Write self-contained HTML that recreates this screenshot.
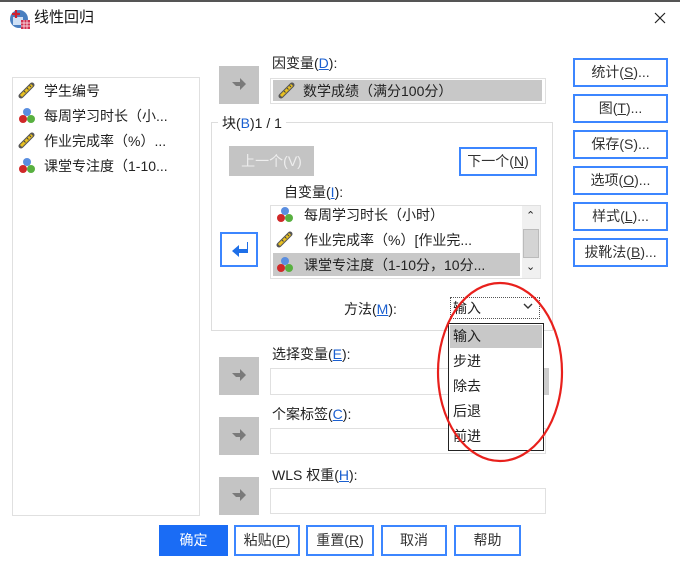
<!DOCTYPE html>
<html><head><meta charset="utf-8"><style>
*{box-sizing:border-box;margin:0;padding:0}
body{width:680px;height:569px;background:#fff;position:relative;overflow:hidden;font-family:"Liberation Sans","Noto Sans CJK SC",sans-serif;font-size:14px;color:#222}
.a{position:absolute}
.t{position:absolute;white-space:nowrap;line-height:18px}
.box{position:absolute;border:1px solid #e0e0e0;background:#fff}
.garr{position:absolute;width:40px;height:38px;background:#c4c4c4}
.rb{position:absolute;left:573px;width:95px;height:29px;border:2px solid #3c86ff;background:#fff;text-align:center;line-height:25px;color:#333}
.bb{position:absolute;top:525px;height:31px;border:2px solid #3c86ff;background:#fff;text-align:center;line-height:27px;color:#333}
u{text-decoration:underline}
.k{color:#1a5fd0}
</style></head><body>
<div class="a" style="left:0;top:0;width:680px;height:2px;background:#555"></div>
<svg class="a" style="left:9px;top:8px" width="22" height="22" viewBox="0 0 22 22"><circle cx="10" cy="11" r="9" fill="#4a7fc0"/><rect x="4" y="9" width="10" height="8" fill="#cfe0f5"/><path d="M3 6h8M7 2v8" stroke="#d02030" stroke-width="2.2"/><rect x="12" y="12" width="9" height="9" fill="#d03050"/><path d="M12 15h9M12 18h9M15 12v9M18 12v9" stroke="#fff" stroke-width=".7"/></svg>
<div class="t" style="left:34px;top:9px;font-size:15px;color:#111">线性回归</div>
<svg class="a" style="left:654px;top:12px" width="12" height="12"><path d="M1 1L11 11M11 1L1 11" stroke="#222" stroke-width="1.2"/></svg>

<div class="box" style="left:12px;top:77px;width:188px;height:439px"></div>
<svg width="0" height="0" style="position:absolute"><defs>
<g id="ru"><path d="M3 14L14 3" stroke="#555" stroke-width="5" stroke-linecap="round"/><path d="M3 14L14 3" stroke="#e8c020" stroke-width="3"/><path d="M6 9l1.5 1.5M9 6l1.5 1.5M11.5 3.5l1.5 1.5" stroke="#444" stroke-width="1"/></g>
<g id="no"><circle cx="9" cy="5" r="4" fill="#5a8ee0"/><circle cx="5" cy="12" r="4" fill="#d02828"/><circle cx="13" cy="12" r="4" fill="#58b040"/></g>
</defs></svg>
<svg class="a" style="left:18px;top:82px" width="18" height="18"><use href="#ru"/></svg>
<div class="t" style="left:44px;top:82px">学生编号</div>
<svg class="a" style="left:18px;top:107px" width="18" height="18"><use href="#no"/></svg>
<div class="t" style="left:44px;top:107px">每周学习时长（小...</div>
<svg class="a" style="left:18px;top:132px" width="18" height="18"><use href="#ru"/></svg>
<div class="t" style="left:44px;top:132px">作业完成率（%）...</div>
<svg class="a" style="left:18px;top:157px" width="18" height="18"><use href="#no"/></svg>
<div class="t" style="left:44px;top:157px">课堂专注度（1-10...</div>

<div class="garr" style="left:219px;top:66px"></div>
<svg class="a" style="left:231px;top:78px" width="16" height="14"><path d="M1 4h8V0l6 6-6 6V8H5z" fill="#7a7a7a"/></svg>
<div class="t" style="left:272px;top:54px">因变量(<u class="k">D</u>):</div>
<div class="box" style="left:270px;top:78px;width:276px;height:26px"></div>
<div class="a" style="left:273px;top:80px;width:269px;height:21px;background:#c8c8c8"></div>
<svg class="a" style="left:278px;top:82px" width="18" height="18"><use href="#ru"/></svg>
<div class="t" style="left:303px;top:82px">数学成绩（满分100分）</div>

<div class="a" style="left:211px;top:122px;width:342px;height:209px;border:1px solid #ddd"></div>
<div class="t" style="left:218px;top:114px;background:#fff;padding:0 4px">块(<span class="k">B</span>)1 / 1</div>
<div class="a" style="left:229px;top:146px;width:85px;height:30px;background:#c4c4c4;color:#eee;text-align:center;line-height:30px">上一个(V)</div>
<div class="a" style="left:459px;top:147px;width:78px;height:29px;border:2px solid #3c86ff;text-align:center;line-height:25px;color:#333">下一个(<u>N</u>)</div>
<div class="t" style="left:284px;top:183px">自变量(<u class="k">I</u>):</div>
<div class="a" style="left:220px;top:232px;width:38px;height:35px;border:2px solid #3c86ff;background:#fff"></div>
<svg class="a" style="left:230px;top:240px" width="18" height="18"><path d="M17 2v7H9V5L2 11l7 6v-4h9V2z" fill="#1e6fe8"/></svg>
<div class="box" style="left:270px;top:205px;width:271px;height:74px"></div>
<svg class="a" style="left:276px;top:206px" width="18" height="18"><use href="#no"/></svg>
<div class="t" style="left:304px;top:206px">每周学习时长（小时）</div>
<svg class="a" style="left:276px;top:231px" width="18" height="18"><use href="#ru"/></svg>
<div class="t" style="left:304px;top:231px">作业完成率（%）[作业完...</div>
<div class="a" style="left:273px;top:253px;width:247px;height:23px;background:#c8c8c8"></div>
<svg class="a" style="left:276px;top:256px" width="18" height="18"><use href="#no"/></svg>
<div class="t" style="left:304px;top:256px">课堂专注度（1-10分，10分...</div>
<div class="a" style="left:522px;top:206px;width:18px;height:72px;background:#f0f0f0"></div>
<div class="a" style="left:523px;top:229px;width:16px;height:29px;background:#d4d4d4;border:1px solid #bbb"></div>
<div class="t" style="left:526px;top:207px;font-size:11px">&#8963;</div>
<div class="t" style="left:526px;top:258px;font-size:11px">&#8964;</div>
<div class="t" style="left:344px;top:300px">方法(<u class="k">M</u>):</div>
<div class="a" style="left:450px;top:297px;width:90px;height:22px;border:1px dotted #555;background:#fff"></div>
<div class="t" style="left:453px;top:299px">输入</div>
<svg class="a" style="left:523px;top:303px" width="10" height="8"><path d="M1 1l4 4 4-4" stroke="#333" fill="none" stroke-width="1.4"/></svg>

<div class="garr" style="left:219px;top:357px"></div>
<svg class="a" style="left:231px;top:369px" width="16" height="14"><path d="M1 4h8V0l6 6-6 6V8H5z" fill="#7a7a7a"/></svg>
<div class="t" style="left:272px;top:345px">选择变量(<u class="k">E</u>):</div>
<div class="box" style="left:270px;top:368px;width:279px;height:27px"></div>
<div class="a" style="left:543px;top:368px;width:6px;height:27px;background:#ccc"></div>
<div class="garr" style="left:219px;top:417px"></div>
<svg class="a" style="left:231px;top:429px" width="16" height="14"><path d="M1 4h8V0l6 6-6 6V8H5z" fill="#7a7a7a"/></svg>
<div class="t" style="left:272px;top:405px">个案标签(<u class="k">C</u>):</div>
<div class="box" style="left:270px;top:428px;width:276px;height:26px"></div>
<div class="garr" style="left:219px;top:477px"></div>
<svg class="a" style="left:231px;top:489px" width="16" height="14"><path d="M1 4h8V0l6 6-6 6V8H5z" fill="#7a7a7a"/></svg>
<div class="t" style="left:272px;top:466px">WLS 权重(<u class="k">H</u>):</div>
<div class="box" style="left:270px;top:488px;width:276px;height:26px"></div>

<div class="a" style="left:448px;top:323px;width:96px;height:128px;border:1px solid #222;background:#fff"></div>
<div class="a" style="left:450px;top:325px;width:92px;height:23px;background:#c8c8c8"></div>
<div class="t" style="left:453px;top:327px">输入</div>
<div class="t" style="left:453px;top:352px">步进</div>
<div class="t" style="left:453px;top:377px">除去</div>
<div class="t" style="left:453px;top:402px">后退</div>
<div class="t" style="left:453px;top:427px">前进</div>
<svg class="a" style="left:430px;top:275px" width="145" height="195"><ellipse cx="70" cy="97" rx="62" ry="89" fill="none" stroke="#e8201c" stroke-width="2.2"/></svg>

<div class="rb" style="top:58px">统计(<u>S</u>)...</div>
<div class="rb" style="top:94px">图(<u>T</u>)...</div>
<div class="rb" style="top:130px">保存(S)...</div>
<div class="rb" style="top:166px">选项(<u>O</u>)...</div>
<div class="rb" style="top:202px">样式(<u>L</u>)...</div>
<div class="rb" style="top:238px">拔靴法(<u>B</u>)...</div>

<div class="bb" style="left:159px;width:69px;background:#1a6cf5;border-color:#1a6cf5;color:#fff">确定</div>
<div class="bb" style="left:234px;width:66px">粘贴(<u>P</u>)</div>
<div class="bb" style="left:306px;width:68px">重置(<u>R</u>)</div>
<div class="bb" style="left:381px;width:66px">取消</div>
<div class="bb" style="left:454px;width:67px">帮助</div>
</body></html>
